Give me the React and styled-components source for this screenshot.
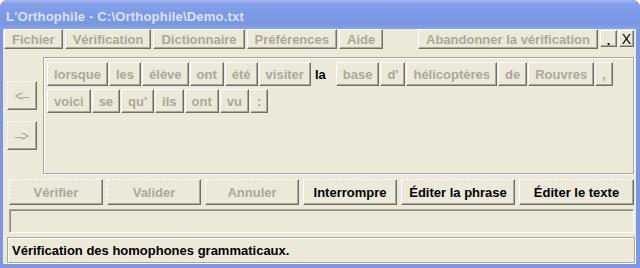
import React from "react";
import styled, { createGlobalStyle, css } from "styled-components";

const GlobalStyle = createGlobalStyle`
  html, body {
    margin: 0;
    padding: 0;
    background: #ffffff;
  }
  body {
    font-family: "Liberation Sans", Arial, sans-serif;
  }
`;

const grey = "#aca899";
const face = "#ece9d8";

const raised = css`
  border: 1px solid;
  border-color: #ffffff #716f64 #716f64 #ffffff;
  box-shadow: inset -1px -1px 0 ${grey};
`;

const Window = styled.div`
  width: 640px;
  height: 268px;
  display: flex;
  flex-direction: column;
  background: #7b97e2;
  border-radius: 7px 7px 0 0;
  overflow: hidden;
`;

const TitleBar = styled.div`
  height: 29px;
  flex: none;
  display: flex;
  align-items: center;
  padding: 3px 0 0 6px;
  box-sizing: border-box;
  color: #d8e4f8;
  font-weight: bold;
  font-size: 13px;
  letter-spacing: 0.2px;
  background: linear-gradient(
    to bottom,
    #a3b8f0 0%,
    #87a2ea 12%,
    #7c99e5 50%,
    #7a97e3 85%,
    #8aa4eb 100%
  );
`;

const Client = styled.div`
  flex: 1;
  margin: 0 4px 4px 3px;
  background: ${face};
  display: flex;
  flex-direction: column;
`;

const MenuBar = styled.div`
  display: flex;
  align-items: flex-start;
  height: 20px;
  padding: 0 2px 0 1px;
  gap: 2px;
`;

const MenuButton = styled.div`
  ${raised};
  height: 20px;
  box-sizing: border-box;
  padding: 0 7px;
  display: flex;
  align-items: center;
  font-size: 13px;
  font-weight: bold;
  color: ${grey};
  margin-left: ${(p) => (p.$push ? "auto" : "0")};
`;

const CaptionButton = styled.div`
  ${raised};
  width: ${(p) => p.$w}px;
  height: 17px;
  margin-top: 1px;
  box-sizing: border-box;
  display: flex;
  align-items: center;
  justify-content: center;
  overflow: hidden;
  color: #000;
  font-size: ${(p) => (p.$big ? "14px" : "13px")};
  font-weight: ${(p) => (p.$big ? "normal" : "bold")};
  line-height: 1;
  padding-top: ${(p) => (p.$big ? "1px" : "3px")};
`;

const Middle = styled.div`
  display: flex;
  margin-top: 8px;
  height: 117px;
`;

const NavColumn = styled.div`
  display: flex;
  flex-direction: column;
  gap: 11px;
  padding-top: 24px;
  margin-left: 4px;
`;

const NavButton = styled.div`
  width: 30px;
  height: 29px;
  box-sizing: border-box;
  border: 1px solid;
  border-color: #ffffff #716f64 #716f64 #ffffff;
  border-top-style: dashed;
  border-left-style: dashed;
  box-shadow: inset -1px -1px 0 ${grey};
  display: flex;
  align-items: center;
  justify-content: center;
  color: ${grey};
  font-size: 14px;
  letter-spacing: -2px;
  padding-right: 2px;
`;

const Panel = styled.div`
  flex: 1;
  margin: 0 2px 0 6px;
  box-sizing: border-box;
  border: 1px solid #a9a797;
  box-shadow: inset 1px 1px 0 #ffffff, 1px 1px 0 #ffffff;
  padding: 4px 3px;
  display: flex;
  flex-wrap: wrap;
  align-content: flex-start;
  gap: 3px 1px;
`;

const Word = styled.div`
  height: 24px;
  box-sizing: border-box;
  display: flex;
  align-items: center;
  font-size: 13px;
  font-weight: bold;
  ${(p) =>
    p.$current
      ? css`
          color: #000;
          padding: 0 9px 0 3px;
        `
      : css`
          ${raised};
          color: ${grey};
          padding: 0 6px;
        `}
`;

const ActionRow = styled.div`
  display: flex;
  gap: 4px;
  margin: 5px 0 0 6px;
  height: 26px;
`;

const ActionButton = styled.div`
  width: ${(p) => p.$w}px;
  height: 26px;
  box-sizing: border-box;
  border: 1px solid;
  border-color: #ffffff #716f64 #716f64 #ffffff;
  border-top-style: dashed;
  border-left-style: ${(p) => (p.$off ? "dashed" : "solid")};
  box-shadow: inset -1px -1px 0 ${grey};
  display: flex;
  align-items: center;
  justify-content: center;
  font-size: 13px;
  font-weight: bold;
  color: ${(p) => (p.$off ? grey : "#000")};
`;

const Field = styled.div`
  height: 24px;
  margin: 4px 2px 0 6px;
  box-sizing: border-box;
  border: 1px solid;
  border-color: ${grey} #ffffff #ffffff ${grey};
  box-shadow: inset 1px 1px 0 #8c8a7c;
`;

const StatusBar = styled.div`
  height: 26px;
  margin: 4px 1px 0 4px;
  box-sizing: border-box;
  border: 1px solid ${grey};
  box-shadow: inset 1px 1px 0 #ffffff, 1px 1px 0 #ffffff;
  display: flex;
  align-items: center;
  padding: 1px 0 0 4px;
  font-size: 13px;
  font-weight: bold;
  color: #000;
`;

const menus = ["Fichier", "Vérification", "Dictionnaire", "Préférences", "Aide"];

const words = [
  "lorsque", "les", "élève", "ont", "été", "visiter", { text: "la", current: true },
  "base", "d'", "hélicoptères", "de", "Rouvres", ",",
  "voici", "se", "qu'", "ils", "ont", "vu", ":",
];

const actions = [
  { label: "Vérifier", w: 94, off: true },
  { label: "Valider", w: 94, off: true },
  { label: "Annuler", w: 94, off: true },
  { label: "Interrompre", w: 94 },
  { label: "Éditer la phrase", w: 114 },
  { label: "Éditer le texte", w: 115 },
];

export default function App() {
  return (
    <>
      <GlobalStyle />
      <Window>
        <TitleBar>L'Orthophile - C:\Orthophile\Demo.txt</TitleBar>
        <Client>
          <MenuBar>
            {menus.map((m) => (
              <MenuButton key={m}>{m}</MenuButton>
            ))}
            <MenuButton $push>Abandonner la vérification</MenuButton>
            <CaptionButton $w={17}>.</CaptionButton>
            <CaptionButton $w={15} $big>X</CaptionButton>
          </MenuBar>
          <Middle>
            <NavColumn>
              <NavButton>&lt;–</NavButton>
              <NavButton>–&gt;</NavButton>
            </NavColumn>
            <Panel>
              {words.map((w, i) =>
                typeof w === "string" ? (
                  <Word key={i}>{w}</Word>
                ) : (
                  <Word key={i} $current>{w.text}</Word>
                )
              )}
            </Panel>
          </Middle>
          <ActionRow>
            {actions.map((a) => (
              <ActionButton key={a.label} $w={a.w} $off={a.off}>
                {a.label}
              </ActionButton>
            ))}
          </ActionRow>
          <Field />
          <StatusBar>Vérification des homophones grammaticaux.</StatusBar>
        </Client>
      </Window>
    </>
  );
}
